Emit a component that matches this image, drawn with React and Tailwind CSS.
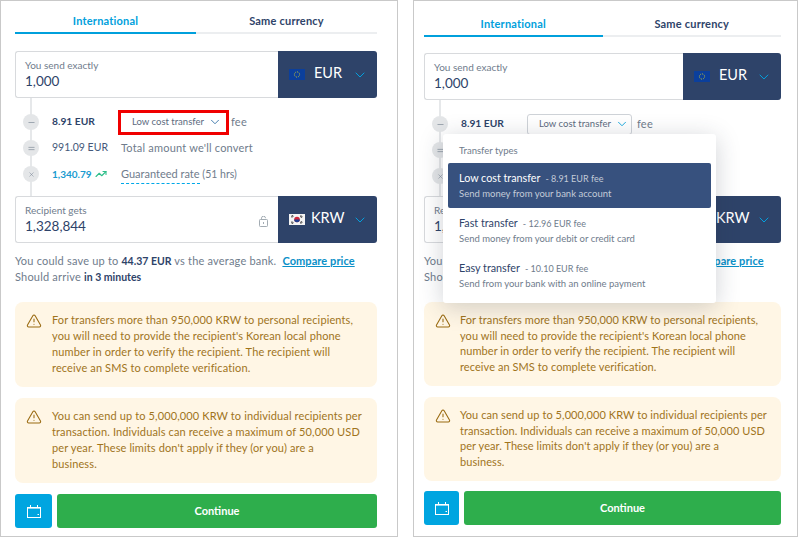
import { ChevronDown, TriangleAlert, TrendingUp, Minus, Equal, X } from 'lucide-react';

const font = { fontFamily: 'Lato' };

const alerts = [
  [
    'For transfers more than 950,000 KRW to personal recipients,',
    "you will need to provide the recipient's Korean local phone",
    'number in order to verify the recipient. The recipient will',
    'receive an SMS to complete verification.',
  ],
  [
    'You can send up to 5,000,000 KRW to individual recipients per',
    'transaction. Individuals can receive a maximum of 50,000 USD',
    "per year. These limits don't apply if they (or you) are a",
    'business.',
  ],
];

const EuFlag = () => (
  <svg width="16" height="11" viewBox="0 0 16 11" className="shrink-0">
    <rect width="16" height="11" fill="#0b3f9c" />
    <circle cx="8" cy="5.5" r="2.6" fill="none" stroke="#b9bd3a" strokeWidth="1" strokeDasharray="1 1" />
  </svg>
);

const KrFlag = () => (
  <svg width="16" height="11" viewBox="0 0 16 11" className="shrink-0">
    <rect width="16" height="11" fill="#f4f4f4" />
    <circle cx="8" cy="5.5" r="2.8" fill="#d0263a" />
    <path d="M5.2 5.5a2.8 2.8 0 0 0 5.6 0z" fill="#1f3f8f" />
    <path d="M2 2.5l2 -1.2M2.6 3.4l2 -1.2M11.5 1.5l2 1.2M11 2.4l2 1.2M2 8.5l2 1.2M2.6 7.6l2 1.2M11.5 9.5l2 -1.2M11 8.6l2 -1.2" stroke="#222" strokeWidth="0.8" />
  </svg>
);

const LockIcon = () => (
  <svg width="9" height="11" viewBox="0 0 9 11" fill="none" stroke="#a3acb3" strokeWidth="1" className="absolute right-[10px] top-[19px]">
    <rect x="0.5" y="3.5" width="8" height="7" rx="0.8" />
    <path d="M2.5 3.5V2.2a2 2 0 0 1 4 0" />
    <path d="M4.5 6v2" />
  </svg>
);

const CalendarIcon = () => (
  <svg width="14" height="13" viewBox="0 0 14 13" fill="none" stroke="white" strokeWidth="1">
    <rect x="0.5" y="2.5" width="13" height="10" />
    <path d="M3.5 0v3M10.5 0v3" />
    <path d="M0.5 3.5h13" strokeOpacity="0.6" />
    <path d="M10.5 9.5h1.5" />
  </svg>
);

const CurrencyBox = ({ label, value, code, flag, lock, gap, width }) => (
  <div className="flex h-[47px] rounded-[3px]">
    <div className="flex-1 border border-[#d8dadd] border-r-0 rounded-l-[3px] pl-[9px] pt-[6px] relative">
      <div className="text-[10px] leading-[14px] text-[#6f7c8c]">{label}</div>
      <div className="text-[13.5px] leading-[18px] text-[#2e4369]">{value}</div>
      {lock && <LockIcon />}
    </div>
    <div className={`${width} shrink-0 bg-[#2e4369] rounded-r-[3px] flex items-center pl-[11px] ${gap}`}>
      {flag}
      <span className="text-[14.5px] text-white mt-[-4px]">{code}</span>
      <ChevronDown size={16} strokeWidth={1.4} className="ml-auto mr-[9px] text-[#00a8e8]" />
    </div>
  </div>
);

const RowIcon = ({ icon: Icon, size = 9 }) => (
  <span className="w-[16px] h-[16px] rounded-full bg-[#e4e6e8] flex items-center justify-center text-[#6f7c8c] shrink-0">
    <Icon size={size} strokeWidth={1.6} />
  </span>
);

const Panel = ({ open }) => (
  <div
    style={font}
    className={
      open
        ? 'w-[385px] ml-[15px] h-[537px] border border-[#c9c9c9] pl-[10px] pr-[16px] pt-[14px] relative'
        : 'w-[398px] h-[537px] border border-[#c9c9c9] pl-[14px] pr-[20px] pt-[11px] relative'
    }
  >
    {/* Tabs */}
    <div className="flex text-[11px] font-bold tracking-[0.2px] h-[22px] leading-[18px]">
      <div className="flex-1 text-center text-[#00a0dc] border-b-2 border-[#00a0dc]">International</div>
      <div className="flex-1 text-center text-[#2e4369] border-b-2 border-[#eceef0]">Same currency</div>
    </div>

    <div className={open ? 'mt-[16px]' : 'mt-[17px]'}>
      <CurrencyBox label="You send exactly" value="1,000" code="EUR" flag={<EuFlag />} gap="gap-[9px]" width={open ? 'w-[98px]' : 'w-[99px]'} />
    </div>

    {/* Fee rows */}
    <div className={`relative ${open ? 'h-[96px]' : 'h-[98px]'} pt-[14px] pl-[8px] text-[11px] text-[#6f7c8c]`}>
      <div className="absolute left-[15px] top-0 bottom-0 w-[2px] bg-[#e6e8ea]" />
      <div className="relative flex items-center h-[20px]">
        <RowIcon icon={Minus} />
        <span className="ml-[13px] w-[66px] text-[10.25px] font-bold text-[#2e4369]">8.91 EUR</span>
        {open ? (
          <span className="flex items-center h-[21px] w-[105px] border border-[#cfd3d8] rounded-[3px] pl-[11px] text-[9.5px] whitespace-nowrap text-[#5d6b80]">
            Low cost transfer
            <ChevronDown size={14} strokeWidth={1.5} className="ml-[4px] text-[#00a0dc]" />
          </span>
        ) : (
          <span className="flex items-center h-[25px] w-[111px] border-[3px] border-[#f00000] pl-[11px] text-[9.5px] whitespace-nowrap text-[#5d6b80]">
            Low cost transfer
            <ChevronDown size={14} strokeWidth={1.5} className="ml-[4px] text-[#2e6da4]" />
          </span>
        )}
        <span className={`${open ? 'ml-[5px]' : 'ml-[2px]'} tracking-[0.2px]`}>fee</span>
      </div>
      <div className="relative flex items-center h-[20px] mt-[6px]">
        <RowIcon icon={Equal} />
        <span className="ml-[13px] w-[69px] text-[10.5px] text-[#44597a]">991.09 EUR</span>
        <span className="tracking-[0.2px]">Total amount we'll convert</span>
      </div>
      <div className="relative flex items-center h-[20px] mt-[6px]">
        <RowIcon icon={X} size={7} />
        <span className="ml-[13px] w-[69px] flex items-center text-[10px] font-bold text-[#1a9bd0]">
          1,340.79
          <TrendingUp size={12} strokeWidth={2.2} className="ml-[3px] text-[#2fbf8a]" />
        </span>
        <span>
          <span className="border-b border-dashed border-b-[#00a8e8] pb-[3px]">Guaranteed rate</span>{' '}
          <span className="text-[10.5px]">(51 hrs)</span>
        </span>
      </div>
    </div>

    <CurrencyBox label="Recipient gets" value="1,328,844" code="KRW" flag={<KrFlag />} gap="gap-[6px]" width={open ? 'w-[98px]' : 'w-[99px]'} lock />

    <div className="mt-[10px] text-[11px] leading-[16px] tracking-[0.2px] text-[#6f7c8c]">
      <div>
        You could save up to <span className="text-[10.5px] font-bold tracking-normal text-[#2e4369]">44.37 EUR</span> vs the average bank.{' '}
        <span className="ml-[3px] font-bold tracking-[0.08px] text-[#0a90c8] underline">Compare price</span>
      </div>
      <div>
        Should arrive <span className="text-[10.5px] font-bold tracking-normal text-[#2e4369]">in 3 minutes</span>
      </div>
    </div>

    {/* Alerts */}
    {alerts.map((lines, i) => (
      <div
        key={i}
        className={`${i === 0 ? 'mt-[17px]' : 'mt-[11px]'} ${open ? 'h-[84px] leading-[15.67px] tracking-[0.07px]' : 'h-[85px] leading-[16px] tracking-[0.12px]'} bg-[#fff6e5] rounded-[8px] pl-[11px] pt-[10px] flex text-[11px] text-[#a0741c]`}
      >
        <TriangleAlert size={16} strokeWidth={1.6} className={`shrink-0 ${open ? 'mr-[9px]' : 'mr-[10px]'} mt-[1px] text-[#9a6a10]`} />
        <div>
          {lines.map((line) => (
            <div key={line} className="whitespace-nowrap">{line}</div>
          ))}
        </div>
      </div>
    ))}

    {/* Actions */}
    <div className={`flex gap-[5px] ${open ? 'mt-[10px]' : 'mt-[11px]'} h-[34px]`}>
      <div className={`${open ? 'w-[35px]' : 'w-[37px]'} bg-[#00a5e0] rounded-[3px] flex items-center justify-center`}>
        <CalendarIcon />
      </div>
      <div className="flex-1 bg-[#2eae4c] rounded-[3px] flex items-center justify-center text-white text-[11px] font-bold">
        Continue
      </div>
    </div>

    {/* Transfer types dropdown */}
    {open && (
      <div className="absolute left-[29px] top-[133px] w-[273px] h-[169px] bg-white rounded-[3px] shadow-[0_4px_24px_rgba(40,50,70,0.22)] px-[5px] text-[#6f7c8c]">
        <div className="pl-[11px] pt-[10px] h-[29px] text-[9.5px] leading-[14px]">Transfer types</div>
        {[
          ['Low cost transfer', '8.91 EUR fee', 'Send money from your bank account'],
          ['Fast transfer', '12.96 EUR fee', 'Send money from your debit or credit card'],
          ['Easy transfer', '10.10 EUR fee', 'Send from your bank with an online payment'],
        ].map(([name, fee, desc], i) => (
          <div
            key={name}
            className={`h-[45px] pl-[11px] pt-[8px] rounded-[2px] text-[9.5px] leading-[14.5px] ${i === 0 ? 'bg-[#37517e] text-[#c3cbd8]' : ''}`}
          >
            <div>
              <span className={`text-[10.75px] ${i === 0 ? 'text-white' : 'text-[#2e4369]'}`}>{name}</span>
              <span className="ml-[5px] text-[9px]">- {fee}</span>
            </div>
            <div>{desc}</div>
          </div>
        ))}
      </div>
    )}
  </div>
);

export default function App() {
  return (
    <div className="flex w-[798px] h-[538px] bg-white overflow-hidden">
      <Panel />
      <Panel open />
    </div>
  );
}
